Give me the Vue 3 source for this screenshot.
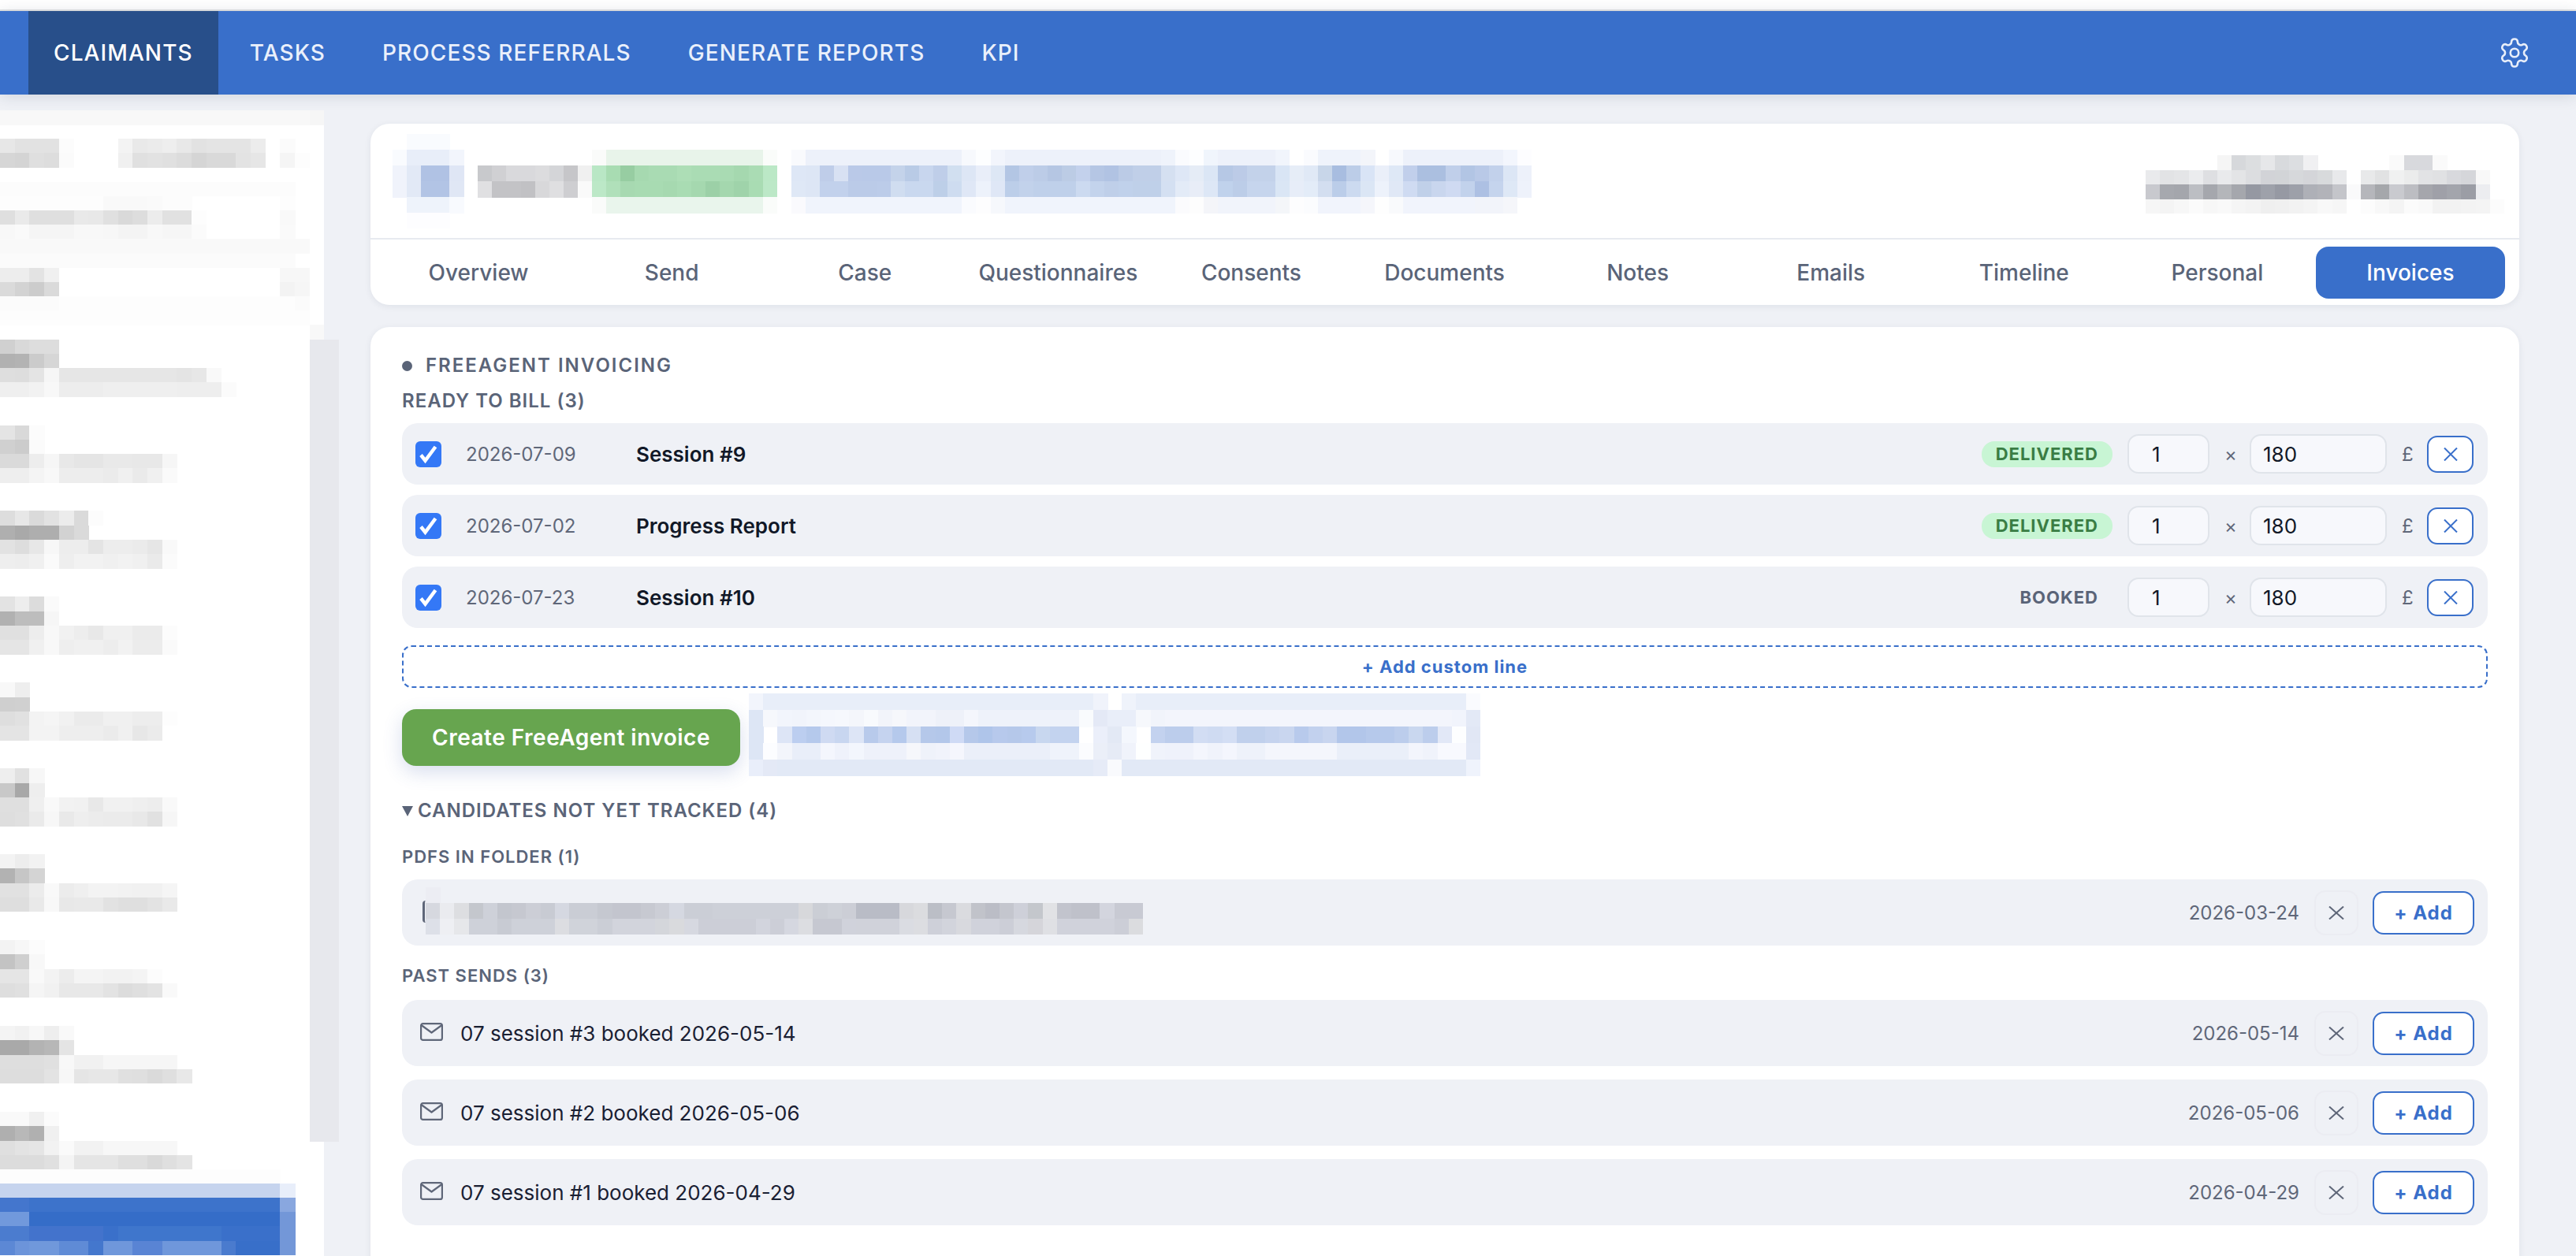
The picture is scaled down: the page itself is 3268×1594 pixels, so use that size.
<script setup>
import { h } from 'vue'

// pixelated (redacted) areas: each row is a list of colours, one per cell.
// 2 hex digits = grey, 6 = full colour, '.' = leave empty, 'xx*3' = repeat
const Mosaic = (props) => {
  const fill = (t) => (t.length === 2 ? `#${t}${t}${t}` : `#${t}`)
  const rects = []
  props.rows.forEach((row, r) => {
    let col = 0
    row.split(' ').filter(Boolean).forEach((tok) => {
      const [c, n] = tok.split('*')
      const count = n ? Number(n) : 1
      if (c !== '.') {
        rects.push(h('rect', {
          x: col * props.w,
          y: r * props.h,
          width: count * props.w + 0.5,
          height: props.h + 0.5,
          fill: fill(c)
        }))
      }
      col += count
    })
  })
  const cols = Math.max(...props.rows.map((row) => row.split(' ').filter(Boolean)
    .reduce((sum, tok) => sum + Number(tok.split('*')[1] || 1), 0)))
  return h('svg', {
    class: 'mosaic',
    width: cols * props.w,
    height: props.rows.length * props.h,
    'shape-rendering': 'crispEdges',
    style: { display: 'block', flex: 'none' }
  }, rects)
}
Mosaic.props = ['rows', 'w', 'h']

const sidebarRows = [
  'f8*21 f6',
  '',
  'e7 e2*3 fc .*3 f3 e9 eb ee e8 e2 e4*3 ec . fb',
  'd6 d4 df dd fb .*3 f0 e0 e2 e0 dc d5 d9*2 e3 e6 . f5 fd',
  '',
  'fc*20',
  'fd*7 f9*3 fa fc*2 .*6 fd',
  'df ea df*3 e9 e8 e0 d9 dd ec e1*2 fd .*5 f9',
  'f8 fa f5*3 f8*2 f7 f4*2 f8 f6*2 fb .*5 fa',
  'f9*21',
  'fb*20',
  'ed*2 e3 f0 .*15 f7*2',
  'da d3 cc da .*15 f3 f6',
  'fb*4 fd*16 fb',
  'fd*21',
  '.*21 f8',
  'd0 d9 dd*2',
  'b1 b3 cb d6',
  'de dd e4 f6 e6*8 e4 e7 f9',
  'ef*2 f2 f8 ed*3 ef*5 ee*3 fb',
  '', '',
  'e4 d9 fc',
  'd0 cc fb',
  'da*2 ed f6 e8 e5*2 e9*2 e8*2 f6',
  'ee*2 f4 f8 ed*3 eb f0 ea f0 fa',
  '', '',
  'dd e7 da e2 ec da fc',
  'af a9 ae*2 d2 da',
  'e2 dd e7 f7 ed*2 e4 ed*2 eb e6 f9',
  'ee ed f0 fa ee f2*2 f0 f2 f0 ea fb',
  '', '',
  'e3 ed dc fa',
  'b1 bd*2 f6',
  'e0*2 ed f8 f1 ed e8 f0*2 eb*2 fc',
  'e5*2 f0 f8 ee f0*2 ed f2 ec*2 fa',
  '', '',
  'f8 ee',
  'cf d0',
  'de e1 f3 f5 f1 eb*2 f0*2 ed*2 fd',
  'e4*2 f3*2 ee*3 eb f0 e7 eb',
  '', '',
  'ee e1 f7',
  'c8 a8 ee',
  'df*2 ef f9 f2 f1 e8 f1*2 ef ed f9',
  'de e0 ea f7 e9 ee ec eb*2 e8 e1 f6',
  '', '',
  'f3 ed f2',
  'b2 c6 d4',
  'e1*2 ec f9 ec ef f3*2 f2 f1*2 f5',
  'de*2 e9 f8 e8 e9*2 e2 df*2 e3 e9',
  '', '',
  'f3 f7 fc',
  'c3 cf f8',
  'e5*2 f9 f3 ec f4*2 f2*2 f4 fc',
  'de e0 f5 f1 e8*3 e3 dc df e3 f9',
  '', '',
  'f4 f1 f7 ee f9',
  'a9*2 b3 b7 e4',
  'de*3 e0 f8 f1*2 f6*5',
  'dd*3 e3 f7 e5 e7*2 e0 df da df e8',
  '', '',
  'f9*2 f0 fb',
  'af b8 b0 f0',
  'df e3 e5 f2 fa f2*2 f7*5',
  'dc*3 e0 f4 e5*3 df*2 d9 df e4',
  'fd*19',
  'c6d4ee*19 e8eefa',
  '4476cd*2 3d73cb*17 89a7df',
  '7199dc*2 356dc8*17 7397d8',
  '4b7ccf*2 4373cc*5 3a70ca 3f76cc*7 3a70ca*4 7397d8',
  '5c88d5 6c94da 7098db*2 5f8bd6*2 4477cd 6f97db*2 5984d4*2 6f97db*4 4a7bce 386fc9*3 7397d8'
]

const caseRows = [
  '. f9fbfe*3',
  'f9fbfe e8eef9*3 f2f5fc .*9 fafbfa e8f4ea*11 fafcfa . f9fafd edf1fa*11 f7f9fd fdfeff f2f5fc edf1fa*11 eff3fb fafbfe fdfeff f0f5fc edf1fa*4 f1f5fc . fafbfe eff3fb*3 f3f5fa . f7f9fd edf1fa*7 f3f6fd fdfdff',
  'f0f3fb e2e9f6 b0c2e4*2 dfe6f5 . c8c9cc d0d0d3 d9d9dc*2 dcdcde d4d5d8 c6c6c9 f0f0f0 b9e7c5 a8dcb2 97cda2 a6d9b0 a9dbb3*2 addeb6 aadcb4*2 a9dbb3 a5d8af aadcb4 bbe8c6 . dee7f6 dde6f5 bfcde9 d8e1f3 bac9e8 b9c9e8*2 c4d3ea b9cbe6 c8d6ee bfcee9 d1dff0 dde6f5 e9eef9 dde7f5 b3c6e4 c0cfea bccce7 b5c6e3 bccce5 c3d1ec b5c6e4 b1c3e3 bbcbe6 c0cfe8*2 d5e0f1 dee7f6 e5ecf6 dbe6f5 b6c8e5 bccbe7 c3d2ea*2 d9e5f5 e6edf7 e0e9f6 c8d6e9 a8bde0 bccde8 d9e4f6 eaeff9 dee8f6 c1cfeb abbfe0*2 c0cfea b2c5e4 b9c9e7 c2d1eb dce6f5 edf1fa',
  'f0f3fb e2e9f6 b2c4e5*2 e0e7f5 . e0e0e2 c3c3c6*2 c1c1c4 d8d8da dfdfe1 ceced1 fafafa bce8c7 b0e0ba a7d9b1 a8dbb2*2 a6d9b0 a9dcb3 a5d8af 9cd0a7 a4d7ae 9fd3aa a9dcb3 bce8c7 . dfe8f6 dde6f5 c2d1ec*2 bbcbe8*2 bccce9 d0ddf0 c9d8ef*2 bdcfe8 cedcf0 dfe7f6 edf2fb dfe7f6 bccee9 c2d2eb bfd0ea*3 ccdaf0 c3d3ec bfcfe9 c0d1eb bfd0e9*2 d4e0f2 e3ebf7 e8edf7 dde7f6 c0d2ec bccde8 c6d5ed*2 dae6f5 e7edf8 e3ecf8 d3def0 bbcde9 ccdaf0 dbe6f5 edf2fb e0e8f6 cfdbf2 c0d0e9 c9d6ee cfdaf2 c2d2ec adc0e3 c5d4ed dee8f6 eef2fb',
  '. eef3fb*3 f8fafe .*9 fafbfa e9f5ec*11 fafcfa . fafafd f0f4fc*11 fafbfe fdfdfe f6f8fc f0f4fc*12 fbfbfd fdfdfd f4f5f9 f1f4fb*4 f4f6f9 fdfdfe fbfcfe f1f4fc*3 f5f6fb fefefe f9fafc f1f4fc*5 f2f4fa*2 f5f6fa',
  '. fdfdff*3'
]

const accountRows = [
  '.*5 f5 d6d8db dcdee0 e6e7e9 d8dadd dcdee1 f0f0f2 .*5 fa d8d9dd*2 fa',
  'e9eaec e2e3e5 e4e5e7 ebecee dedfe2 e9eaec e3e4e6 dcdde0 d2d3d7 d2d4d7 d6d8db d4d5d9 d8dadc e8e9eb . e8e9ea e1e2e3 f0f1f1 ebecec e2e3e5 e0e1e3 d8d9dd d5d6da f8f8f8',
  'c8c9ce a6a8ae a4a6ac bcbec3 a5a7ad b4b6ba a5a7ad 9598a2 9ea1aa 9699a3 9da0a9 aeb0b7 b2b3b9 c4c5ca fafafb b5b6bb a5a7ab c9cacf bcbdc2 a5a6ac 9fa0a8 a3a5ac 9b9da5 ecedf0',
  'f6 f4 f7 fb f7 f9 f5 f3 ef f0 f2 f4 f8 f6 . fc f8 f4 fb f9 f2*2 f3 f4 fc'
]

const linkRows = [
  'f2f5fc e8eef9*23 f0f3fb . eff3fb e8eef9*23 fafbfe',
  'dde6f5 f6f8fc f2f5fc f1f4fb f3f6fc f5f7fd f6f8fd f4f6fb f8fafd f2f4fa f6f7fb f2f4fb*2 eef1f9*2 f4f6fc eef2fa*7 f9fbfd e4e9f6 e9eef9*2 f6f8fc f1f4fb f3f5fc*20 f1f4fc e3e9f6',
  'dde6f5 . dde5f6 bccef0 b5c9ec cfdaf2 c8d6f0 dde5f6 b8caeb c5d3ef b5c9ec d6e0f3 b5c8ea b3c7ea cfdaf5 b5c8ea afc5ea b7c9ec b5c8ea b7caed c8d7ef c3d3ef*2 . ebeffa e3e9f5 f4f7fd . c3d2ef bccdec*2 d2ddf3 cfdbf2 d3def4 c0d0ec*2 c5d3ee c9d6ef b8caec c2d1ee c8d5ef b2c6ea*2 b6c9eb*2 bccdec c9d7ef bccdec e2e8f7 fdfeff e1e7f5',
  'dde6f5 fcfdff f3f5fb e9eef9*2 f4f6fd eff2fb f3f6fd eef1fa*3 f6f7fb eff2fa f1f3fb f5f6fd ebeff9*6 eff3fb*2 fbfcfe ebeff8 e6ebf6 f0f3fb feffff f0f3fb eff2fb*2 f4f6fd f0f3fb f4f6fd eef2fa*2 f4f6fc*5 eaeff9*5 f3f5fc f0f3fb f8f9fe*2 e2e8f6',
  'e9eefa e4e9f6 e2e9f6*22 e6ebf7 f9fafd e2e9f6*24 eff3fc'
]

const fileRows = [
  'ecedf3',
  'd6d8df eaebef dddee1 c4c7cd ced1d9 c3c6ce c6c8d0 ccced6 c8cbd3 d5d8e1 cacdd5*2 c5c8d0 c3c5ce*2 c7c9d1 ccced6 d5d8e1 cbced6*2 cdd0d8*6 d7d8db cbced5 ced1d8 ccced6 b9bcc6*3 d7d8dc dbdcdf bbbec6 c6c8d0 dadbdf c1c3ca bbbdc6 c4c6ce ced0d9 c4c7cc e1e2e5 c2c4cd bfc1ca*2 d3d5de c8cad3*2',
  'dde0e8 eeeff3 e6e7ea ced1d9*2 c8cbd3 ced1d9*3 dcdde1 d0d3da*2 cbced6 d2d4dc*3 d4d6db d9dadd d6d8e0 ccced7*4 d2d4dd ccced7 d5d7e0 dcdde1 c6c8d1*2 d0d2db d0d2da*3 dadce2 dcdde1 ced0d9 d2d4dc d8d9de d0d2db*2 ccced7 d6d8df d5d5da dfe0e4 d0d2db*4 ccced7 dbdcdf'
]

const navItems = ['CLAIMANTS', 'TASKS', 'PROCESS REFERRALS', 'GENERATE REPORTS', 'KPI']
const tabs = ['Overview', 'Send', 'Case', 'Questionnaires', 'Consents', 'Documents', 'Notes', 'Emails', 'Timeline', 'Personal', 'Invoices']

const billLines = [
  { date: '2026-07-09', title: 'Session #9', status: 'DELIVERED', delivered: true },
  { date: '2026-07-02', title: 'Progress Report', status: 'DELIVERED', delivered: true },
  { date: '2026-07-23', title: 'Session #10', status: 'BOOKED', delivered: false }
]

const pastSends = [
  { title: '07 session #3 booked 2026-05-14', date: '2026-05-14' },
  { title: '07 session #2 booked 2026-05-06', date: '2026-05-06' },
  { title: '07 session #1 booked 2026-04-29', date: '2026-04-29' }
]
</script>

<template>
  <div class="page">
    <div class="top-strip"></div>
    <header class="nav">
      <a v-for="(item, i) in navItems" :key="item" class="nav-item" :class="{ active: i === 0 }">{{ item }}</a>
      <svg class="gear" viewBox="0 0 24 24" fill="none" stroke="currentColor" stroke-width="1.5" stroke-linecap="round" stroke-linejoin="round">
        <path d="M12.22 2h-.44a2 2 0 0 0-2 2v.18a2 2 0 0 1-1 1.73l-.43.25a2 2 0 0 1-2 0l-.15-.08a2 2 0 0 0-2.73.73l-.22.38a2 2 0 0 0 .73 2.73l.15.1a2 2 0 0 1 1 1.72v.51a2 2 0 0 1-1 1.74l-.15.09a2 2 0 0 0-.73 2.73l.22.38a2 2 0 0 0 2.73.73l.15-.08a2 2 0 0 1 2 0l.43.25a2 2 0 0 1 1 1.73V20a2 2 0 0 0 2 2h.44a2 2 0 0 0 2-2v-.18a2 2 0 0 1 1-1.73l.43-.25a2 2 0 0 1 2 0l.15.08a2 2 0 0 0 2.73-.73l.22-.39a2 2 0 0 0-.73-2.73l-.15-.08a2 2 0 0 1-1-1.74v-.5a2 2 0 0 1 1-1.74l.15-.09a2 2 0 0 0 .73-2.73l-.22-.38a2 2 0 0 0-2.73-.73l-.15.08a2 2 0 0 1-2 0l-.43-.25a2 2 0 0 1-1-1.73V4a2 2 0 0 0-2-2z" />
        <circle cx="12" cy="12" r="3" />
      </svg>
    </header>

    <div class="body">
      <aside class="sidebar">
        <Mosaic :rows="sidebarRows" :w="18.7" :h="18.16" />
        <div class="scrollbar"></div>
      </aside>

      <main class="content">
        <section class="case-card">
          <div class="case-head">
            <Mosaic class="case-title" :rows="caseRows" :w="18.06" :h="20" />
            <Mosaic class="case-account" :rows="accountRows" :w="18.2" :h="18.5" />
          </div>
          <nav class="tabs">
            <button v-for="(tab, i) in tabs" :key="tab" class="tab" :class="{ current: i === tabs.length - 1 }">{{ tab }}</button>
          </nav>
        </section>

        <section class="invoice-card">
          <h2 class="card-title"><span class="dot"></span>FREEAGENT INVOICING</h2>
          <h3 class="ready">READY TO BILL (3)</h3>

          <div class="bill-list">
            <div v-for="line in billLines" :key="line.date" class="bill-row">
              <span class="check">
                <svg viewBox="0 0 33 33" width="33" height="33" fill="none" stroke="#fff" stroke-width="4.5">
                  <path d="M7 17.5l5.5 7L25.5 7" />
                </svg>
              </span>
              <span class="bill-date">{{ line.date }}</span>
              <span class="bill-title">{{ line.title }}</span>
              <span class="status" :class="{ delivered: line.delivered }">{{ line.status }}</span>
              <input class="field qty" type="text" value="1" readonly />
              <span class="sym">×</span>
              <input class="field price" type="text" value="180" readonly />
              <span class="sym">£</span>
              <button class="remove">
                <svg viewBox="0 0 18 17" width="18" height="17" fill="none" stroke="currentColor" stroke-width="2">
                  <path d="M1 .5l16 16M17 .5l-16 16" />
                </svg>
              </button>
            </div>
          </div>

          <button class="add-line">+ Add custom line</button>

          <div class="actions">
            <button class="create">Create FreeAgent invoice</button>
            <Mosaic :rows="linkRows" :w="18.2" :h="21" />
          </div>

          <div class="candidates"><span class="caret"></span>CANDIDATES NOT YET TRACKED (4)</div>

          <h4 class="group group-pdf">PDFS IN FOLDER (1)</h4>
          <div class="cand-row cand-file">
            <span class="file-edge"></span>
            <Mosaic :rows="fileRows" :w="18.2" :h="20" />
            <span class="cand-date">2026-03-24</span>
            <button class="dismiss">
              <svg viewBox="0 0 20 17" width="20" height="17" fill="none" stroke="currentColor" stroke-width="2">
                <path d="M1 .5l18 16M19 .5l-18 16" />
              </svg>
            </button>
            <button class="add">+ Add</button>
          </div>

          <h4 class="group group-past">PAST SENDS (3)</h4>
          <div class="past-list">
            <div v-for="send in pastSends" :key="send.date" class="cand-row">
              <svg class="mail" viewBox="0 0 29 23" width="29" height="23" fill="none" stroke="currentColor" stroke-width="2.2" stroke-linejoin="round">
                <rect x="1.1" y="1.1" width="26.8" height="20.8" rx="2.5" />
                <path d="M1.5 3l13 9.5 13-9.5" />
              </svg>
              <span class="cand-title">{{ send.title }}</span>
              <span class="cand-date">{{ send.date }}</span>
              <button class="dismiss">
                <svg viewBox="0 0 20 17" width="20" height="17" fill="none" stroke="currentColor" stroke-width="2">
                  <path d="M1 .5l18 16M19 .5l-18 16" />
                </svg>
              </button>
              <button class="add">+ Add</button>
            </div>
          </div>
        </section>
      </main>
    </div>
  </div>
</template>

<style>
html, body {
  margin: 0;
  background: #eff1f6;
}
</style>

<style scoped>
.page {
  width: 3268px;
  height: 1594px;
  overflow: hidden;
  background: #eff1f6;
  font-family: Inter, "Liberation Sans", sans-serif;
  color: #111827;
}

button {
  font-family: inherit;
  cursor: pointer;
}

.top-strip {
  height: 12px;
  background: #fff;
  border-bottom: 2px solid #e2e3e3;
}

.nav {
  position: relative;
  z-index: 2;
  display: flex;
  align-items: stretch;
  gap: 8px;
  height: 106px;
  padding-left: 36px;
  background: #396fca;
  box-shadow: 0 2px 18px rgba(30, 40, 70, 0.14);
}

.nav-item {
  display: flex;
  align-items: center;
  padding: 0 32px;
  font-size: 28px;
  font-weight: 500;
  letter-spacing: 1.1px;
  color: #eaf0fb;
}

.nav-item.active {
  background: #284f8a;
  color: #fff;
}

.gear {
  width: 42px;
  height: 42px;
  margin: auto 57px auto auto;
  color: #e8eefa;
}

.body {
  display: flex;
  height: 1474px;
}

.sidebar {
  position: relative;
  width: 411px;
  margin-top: 20px;
  background: #fff;
  flex: none;
}

.scrollbar {
  position: absolute;
  left: 393px;
  top: 291px;
  width: 37px;
  height: 1018px;
  background: #e7e8ed;
}

.content {
  width: 2726px;
  margin-left: 59px;
  padding-top: 37px;
}

.case-card {
  background: #fff;
  border-radius: 24px;
  box-shadow: 0 2px 8px rgba(40, 50, 80, 0.08);
}

.case-head {
  display: flex;
  justify-content: space-between;
  height: 145px;
  border-bottom: 2px solid #e7eaf0;
}

.case-title {
  margin: 13px 0 0 28px;
}

.case-account {
  margin: 40px 19px 0 0;
}

.tabs {
  display: flex;
  gap: 5px;
  height: 83px;
  padding: 9px 18px 8px 17px;
  box-sizing: border-box;
}

.tab {
  flex: 1 1 0;
  border: 0;
  border-radius: 16px;
  background: none;
  font-size: 28px;
  font-weight: 500;
  color: #5a6478;
}

.tab.current {
  background: #396fca;
  color: #fff;
}

.invoice-card {
  height: 1300px;
  margin-top: 28px;
  padding: 35px 40px 0;
  box-sizing: border-box;
  background: #fff;
  border-radius: 24px;
  box-shadow: 0 2px 8px rgba(40, 50, 80, 0.08);
}

.card-title {
  display: flex;
  align-items: center;
  gap: 17px;
  margin: 0;
  font-size: 24px;
  line-height: 28px;
  font-weight: 600;
  letter-spacing: 2px;
  color: #5a6478;
}

.dot {
  width: 13px;
  height: 13px;
  border-radius: 50%;
  background: #5a6478;
}

.ready {
  margin: 17px 0 0;
  font-size: 24px;
  line-height: 28px;
  font-weight: 600;
  letter-spacing: 1px;
  color: #5a6478;
}

.bill-list {
  display: flex;
  flex-direction: column;
  gap: 13px;
  margin-top: 14px;
}

.bill-row {
  display: flex;
  align-items: center;
  gap: 19px;
  height: 78px;
  padding: 0 18px 0 17px;
  box-sizing: border-box;
  background: #eff1f6;
  border-radius: 20px;
}

.check {
  width: 33px;
  height: 33px;
  margin-right: 12px;
  border-radius: 6px;
  background: #3478f6;
  flex: none;
}

.check svg {
  display: block;
}

.bill-date {
  width: 197px;
  font-size: 24px;
  color: #5f6779;
}

.bill-title {
  flex: 1;
  font-size: 26px;
  font-weight: 600;
  color: #111827;
}

.status {
  padding: 0 18px;
  height: 33px;
  line-height: 33px;
  border-radius: 16px;
  font-size: 22px;
  font-weight: 700;
  letter-spacing: 1px;
  color: #5a6478;
}

.status.delivered {
  background: #c8f5d4;
  color: #3a7d44;
}

.field {
  height: 50px;
  padding: 0 0 0 29px;
  box-sizing: border-box;
  border: 2px solid #e0e4ea;
  border-radius: 14px;
  background: #f7f8fc;
  font-family: inherit;
  font-size: 26px;
  color: #111827;
  outline: none;
}

.qty {
  width: 104px;
}

.price {
  width: 174px;
  padding-left: 15px;
}

.sym {
  width: 13px;
  font-size: 24px;
  color: #5f6779;
  text-align: center;
}

.remove {
  display: flex;
  align-items: center;
  justify-content: center;
  width: 59px;
  height: 47px;
  padding: 0;
  border: 2px solid #396fca;
  border-radius: 13px;
  background: #fff;
  color: #396fca;
}

.add-line {
  display: block;
  width: 100%;
  height: 54px;
  margin-top: 22px;
  border: 2px dashed #396fca;
  border-radius: 12px;
  background: #fff;
  font-size: 22px;
  font-weight: 700;
  letter-spacing: 1px;
  color: #396fca;
}

.actions {
  display: flex;
  align-items: center;
  gap: 11px;
  margin-top: 7px;
}

.create {
  width: 429px;
  height: 72px;
  margin-top: 6px;
  border: 0;
  border-radius: 18px;
  background: #67a54f;
  box-shadow: 0 8px 24px rgba(60, 90, 170, 0.2);
  font-size: 28px;
  font-weight: 600;
  letter-spacing: 0.5px;
  color: #fff;
  flex: none;
}

.candidates {
  display: flex;
  align-items: center;
  gap: 6px;
  margin-top: 30px;
  font-size: 24px;
  line-height: 28px;
  font-weight: 600;
  letter-spacing: 1px;
  color: #5a6478;
}

.caret {
  width: 0;
  height: 0;
  border-left: 7px solid transparent;
  border-right: 7px solid transparent;
  border-top: 13px solid #5a6478;
}

.group {
  margin: 0;
  font-size: 22px;
  line-height: 26px;
  font-weight: 600;
  letter-spacing: 1px;
  color: #5a6478;
}

.group-pdf {
  margin-top: 31px;
}

.group-past {
  margin-top: 25px;
}

.cand-row {
  display: flex;
  align-items: center;
  height: 84px;
  padding: 0 17px 0 23px;
  box-sizing: border-box;
  background: #eff1f6;
  border-radius: 20px;
}

.cand-file {
  position: relative;
  margin-top: 16px;
  padding-left: 30px;
}

.cand-file .mosaic {
  margin-top: -4px;
}

.file-edge {
  position: absolute;
  left: 26px;
  top: 27px;
  width: 4px;
  height: 28px;
  border-left: 3px solid #5f6779;
  border-radius: 4px 0 0 4px;
  box-sizing: border-box;
}

.past-list {
  display: flex;
  flex-direction: column;
  gap: 17px;
  margin-top: 18px;
}

.mail {
  color: #5f6779;
  margin: -3px 22px 0 0;
  flex: none;
}

.cand-title {
  font-size: 26px;
  color: #1a2033;
}

.cand-date {
  margin-left: auto;
  font-size: 24px;
  color: #5f6779;
}

.dismiss {
  display: flex;
  align-items: center;
  justify-content: center;
  width: 56px;
  height: 57px;
  margin-left: 19px;
  padding: 0;
  border: 2px solid #ebecf2;
  border-radius: 14px;
  background: transparent;
  color: #5f6779;
}

.add {
  width: 129px;
  height: 55px;
  margin-left: 18px;
  padding: 0;
  border: 2px solid #396fca;
  border-radius: 14px;
  background: #fff;
  font-size: 24px;
  font-weight: 700;
  letter-spacing: 1px;
  color: #396fca;
}
</style>
